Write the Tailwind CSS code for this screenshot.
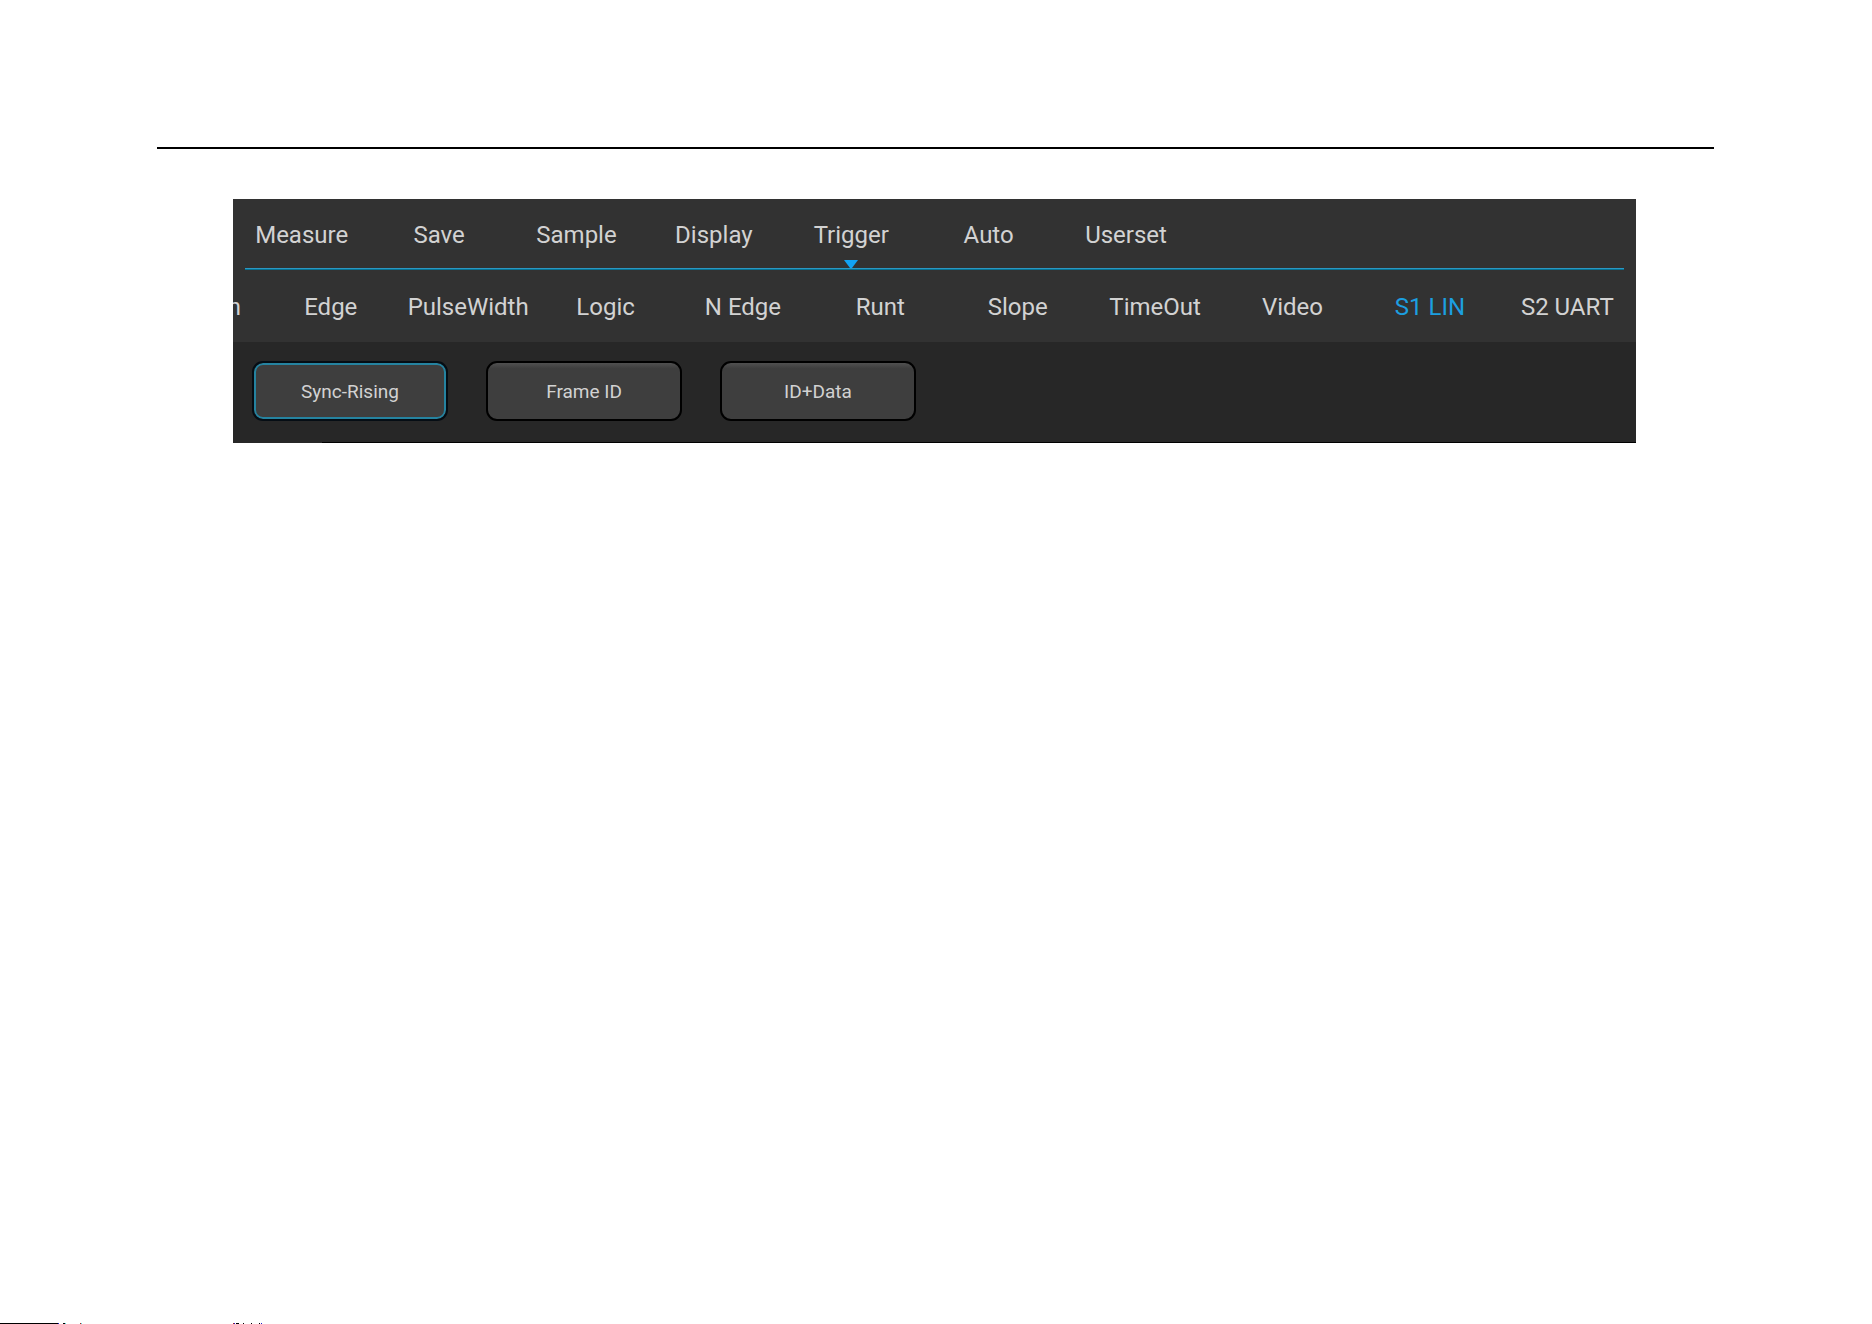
<!DOCTYPE html>
<html lang="en">
<head>
  <meta charset="UTF-8" />
  <meta name="viewport" content="width=device-width, initial-scale=1.0" />
  <title>Trigger menu - LIN</title>
  <script src="https://cdn.jsdelivr.net/npm/@tailwindcss/browser@4"></script>
</head>
<body class="bg-white min-h-screen flex flex-col font-['Roboto',sans-serif] text-[#d2d2d2]">

  <header class="ml-[157px] mr-[158px] pt-[147px]">
    <div class="h-[2px] bg-black"></div>
  </header>

  <main class="ml-[233px] mr-[236px] mt-[50px] bg-[#272727]">
    <!-- Main menu -->
    <div class="bg-[#323232]">
      <nav class="grid grid-cols-[repeat(10,137fr)_29fr] h-[69px] text-2xl whitespace-nowrap">
        <button type="button" class="pt-0.5">Measure</button>
        <button type="button" class="pt-0.5">Save</button>
        <button type="button" class="pt-0.5">Sample</button>
        <button type="button" class="pt-0.5">Display</button>
        <button type="button" class="pt-0.5 relative">
          Trigger
          <svg class="absolute bottom-0 left-1/2 -translate-x-1/2 w-[14px] h-[9px]" viewBox="0 0 14 9"><path d="M0 1h14L8 9H6z" fill="#12a3f5" /></svg>
        </button>
        <button type="button" class="pt-0.5">Auto</button>
        <button type="button" class="pt-0.5">Userset</button>
      </nav>

      <div class="mx-3 h-[2px] border-t border-[#2a98c4] bg-[#067090]"></div>

      <!-- Trigger types, scrolled to the end -->
      <nav class="grid grid-cols-[29fr_repeat(10,137fr)] h-[72px] text-2xl whitespace-nowrap">
        <button type="button" class="pt-0.5 min-w-0 flex items-center justify-end pr-[21px] overflow-hidden">n</button>
        <button type="button" class="pt-0.5">Edge</button>
        <button type="button" class="pt-0.5">PulseWidth</button>
        <button type="button" class="pt-0.5">Logic</button>
        <button type="button" class="pt-0.5">N Edge</button>
        <button type="button" class="pt-0.5">Runt</button>
        <button type="button" class="pt-0.5">Slope</button>
        <button type="button" class="pt-0.5">TimeOut</button>
        <button type="button" class="pt-0.5">Video</button>
        <button type="button" class="pt-0.5 text-[#1c9fe0]">S1 LIN</button>
        <button type="button" class="pt-0.5">S2 UART</button>
      </nav>
    </div>

    <!-- LIN trigger conditions -->
    <div class="flex gap-[38px] px-[19px] pt-[19px] pb-[21px] text-[19px]">
      <button type="button" class="pt-0.5 w-[196px] h-[60px] rounded-[11px] border-2 border-[#050d14] bg-[#3e3e3e] inset-ring-2 inset-ring-[#2583a0]">Sync-Rising</button>
      <button type="button" class="pt-0.5 w-[196px] h-[60px] rounded-[11px] border-2 border-black bg-linear-to-b from-[#505050] from-0% to-[#3e3e3e] to-10%">Frame ID</button>
      <button type="button" class="pt-0.5 w-[196px] h-[60px] rounded-[11px] border-2 border-black bg-linear-to-b from-[#505050] from-0% to-[#3e3e3e] to-10%">ID+Data</button>
    </div>
    <div class="ml-[89px] h-px bg-black"></div>
  </main>

  <!-- Top edge of the next line -->
  <footer class="mt-auto">
    <svg class="block w-[264px] h-px" viewBox="0 0 264 1" shape-rendering="crispEdges">
      <path d="M0 0h58v1H0zM63 0h2v1h-2zM236 0h3v1h-3zM243 0h1v1h-1zM251 0h1v1h-1zM259 0h1v1h-1z" fill="#000" />
      <path d="M58 0h1v1h-1zM234 0h1v1h-1zM261 0h1v1h-1z" fill="#2020d0" />
      <path d="M65 0h1v1h-1zM81 0h1v1h-1z" fill="#50e0e0" />
      <path d="M80 0h1v1h-1zM233 0h1v1h-1z" fill="#b02020" />
    </svg>
  </footer>

</body>
</html>
